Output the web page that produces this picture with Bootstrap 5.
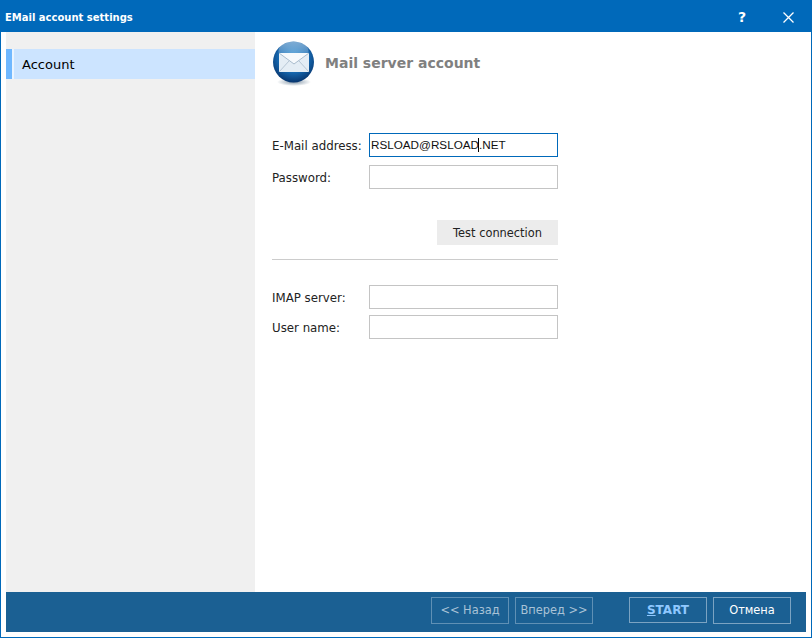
<!DOCTYPE html>
<html lang="en">

<head>
    <meta charset="UTF-8">
    <meta name="viewport" content="width=device-width, initial-scale=1.0">
    <title>EMail account settings</title>
    <link href="https://cdn.jsdelivr.net/npm/bootstrap@5.3.0/dist/css/bootstrap.min.css" rel="stylesheet">
    <style>
        html, body {
            height: 100%;
            overflow: hidden;
        }

        body {
            font-family: "DejaVu Sans", Tahoma, sans-serif;
            font-size: 12px;
            color: #222;
        }

        .app-window {
            height: 638px;
            border: 1px solid #0069ba;
            border-top: 0;
        }

        .app-title {
            height: 32px;
            margin: 0 -1px;
            padding: 2px 0 0 5px;
            background: #0069ba;
            font-size: 10px;
        }

        .title-btn {
            width: 46px;
            font-size: 14px;
        }

        .side-x {
            margin-right: 1px;
        }

        .app-body {
            padding: 0 5px 5px;
            min-height: 0;
        }

        .side-panel {
            width: 249px;
            background: #f0f0f0;
            padding-top: 17px;
        }

        .side-item {
            height: 30px;
            border-left: 6px solid #70b8ff;
            background: linear-gradient(to right, #eaf4ff 2px, #cce4ff 2px);
            padding: 1px 0 0 10px;
            font-size: 13px;
            color: #000;
        }

        .main-panel {
            padding: 9px 0 0 18px;
        }

        .head-row {
            height: 46px;
            width: 300px;
        }

        .head-text {
            font-size: 14px;
            font-weight: 700;
            color: #808080;
            margin-left: 10px;
            margin-bottom: 1px;
        }

        .form-box {
            width: 286px;
            margin: 46px 0 0 -1px;
        }

        .field-row {
            height: 24px;
        }

        .field-first {
            margin-bottom: 8px;
        }

        .field-second {
            margin-bottom: 6px;
        }

        .field-label {
            width: 97px;
            font-size: 11.8px;
            padding-top: 4px;
        }

        .field-wrap {
            width: 189px;
        }

        .field-input {
            height: 24px;
            border: 1px solid #c4c4c4;
            border-radius: 0;
            padding: 0 1px 2px;
            color: #111;
            font-family: "Liberation Sans", Arial, sans-serif;
            font-size: 11.7px;
        }

        .field-active {
            border-color: #0069ba;
        }

        .text-caret {
            position: absolute;
            left: 109px;
            top: 5px;
            width: 1px;
            height: 14px;
            background: #000;
        }

        .test-row {
            margin-top: 31px;
        }

        .test-btn {
            width: 121px;
            height: 25px;
            background: #ececec;
            border: 0;
            border-radius: 0;
            font-size: 11.4px;
            color: #222;
            padding: 2px 0 0;
        }

        .form-line {
            margin: 14px 0 25px;
            border: 0;
            border-top: 1px solid #ccc;
            opacity: 1;
        }

        .app-footer {
            height: 40px;
            background: #1b6093;
            padding: 5px 15px 0 0;
            gap: 6px;
        }

        .foot-btn {
            width: 78px;
            height: 27px;
            border: 1px solid #7ba3c2;
            border-radius: 0;
            background: transparent;
            color: #fff;
            font-size: 11.4px;
            padding: 0;
            line-height: 1;
        }

        .foot-btn:disabled {
            border-color: #5f90b5;
            color: #a9c2d6;
            opacity: 1;
        }

        .foot-start {
            height: 26px;
            margin-left: 30px;
            font-size: 12px;
            font-weight: 700;
            color: #8fc8ff;
        }
    </style>
</head>

<body>
    <div class="app-window d-flex flex-column bg-white">
        <div class="app-title d-flex align-items-center text-white flex-shrink-0">
            <span class="fw-bold flex-grow-1">EMail account settings</span>
            <span class="title-btn text-center fw-semibold">?</span>
            <span class="title-btn side-x d-flex justify-content-center">
                <svg width="11" height="11" viewBox="0 0 11 11">
                    <path d="M.5 .5L10.5 10.5M10.5 .5L.5 10.5" stroke="#fff" stroke-width="1.3" fill="none" />
                </svg>
            </span>
        </div>

        <div class="app-body d-flex flex-column flex-grow-1">
            <div class="d-flex flex-grow-1">
                <div class="side-panel flex-shrink-0">
                    <div class="side-item d-flex align-items-center">Account</div>
                </div>

                <div class="main-panel flex-grow-1">
                    <div class="head-row d-flex align-items-center">
                        <svg width="42" height="46" viewBox="0 0 42 46">
                            <defs>
                                <radialGradient id="ballFill" cx="50%" cy="38%" r="62%">
                                    <stop offset="0" stop-color="#3f97d6" />
                                    <stop offset="0.6" stop-color="#1668b0" />
                                    <stop offset="1" stop-color="#07356e" />
                                </radialGradient>
                                <linearGradient id="ballShine" x1="0" y1="0" x2="0" y2="1">
                                    <stop offset="0" stop-color="#fff" stop-opacity="0.45" />
                                    <stop offset="1" stop-color="#fff" stop-opacity="0.05" />
                                </linearGradient>
                                <radialGradient id="ballShadow">
                                    <stop offset="0" stop-color="#34536e" stop-opacity="0.6" />
                                    <stop offset="1" stop-color="#34536e" stop-opacity="0" />
                                </radialGradient>
                            </defs>
                            <ellipse cx="21" cy="41" rx="17" ry="4" fill="url(#ballShadow)" />
                            <circle cx="20.5" cy="21" r="20.5" fill="url(#ballFill)" />
                            <ellipse cx="20.5" cy="10" rx="15" ry="9.5" fill="url(#ballShine)" />
                            <path d="M6 12H36V31H6Z" fill="#e4edf5" />
                            <path d="M6 12L21 23L36 12" fill="#f6f9fc" stroke="#a9bccd" stroke-width="1" />
                            <path d="M6 31L16 20M36 31L26 20" stroke="#b7c7d6" stroke-width="1" fill="none" />
                        </svg>
                        <span class="head-text">Mail server account</span>
                    </div>

                    <form class="form-box">
                        <div class="field-row field-first d-flex align-items-center">
                            <label class="field-label" for="mailAddr">E-Mail address:</label>
                            <div class="field-wrap position-relative">
                                <input type="text" class="form-control field-input field-active" id="mailAddr" value="RSLOAD@RSLOAD.NET">
                                <span class="text-caret"></span>
                            </div>
                        </div>
                        <div class="field-row d-flex align-items-center">
                            <label class="field-label" for="mailPass">Password:</label>
                            <div class="field-wrap">
                                <input type="password" class="form-control field-input" id="mailPass">
                            </div>
                        </div>

                        <div class="test-row d-flex justify-content-end">
                            <button type="button" class="btn test-btn">Test connection</button>
                        </div>
                        <hr class="form-line">

                        <div class="field-row field-second d-flex align-items-center">
                            <label class="field-label" for="imapHost">IMAP server:</label>
                            <div class="field-wrap">
                                <input type="text" class="form-control field-input" id="imapHost">
                            </div>
                        </div>
                        <div class="field-row d-flex align-items-center">
                            <label class="field-label" for="userName">User name:</label>
                            <div class="field-wrap">
                                <input type="text" class="form-control field-input" id="userName">
                            </div>
                        </div>
                    </form>
                </div>
            </div>

            <div class="app-footer d-flex justify-content-end align-items-start flex-shrink-0">
                <button type="button" class="btn foot-btn" disabled>&lt;&lt; Назад</button>
                <button type="button" class="btn foot-btn" disabled>Вперед &gt;&gt;</button>
                <button type="button" class="btn foot-btn foot-start"><u>S</u>TART</button>
                <button type="button" class="btn foot-btn">Отмена</button>
            </div>
        </div>
    </div>

    <script src="https://cdn.jsdelivr.net/npm/bootstrap@5.3.0/dist/js/bootstrap.bundle.min.js"></script>
</body>

</html>
